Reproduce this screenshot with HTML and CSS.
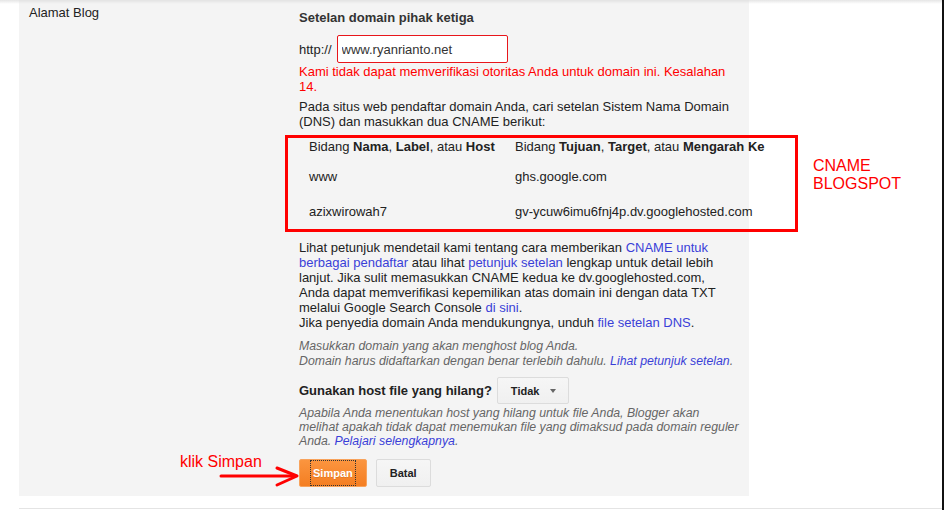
FILE: index.html
```html
<!DOCTYPE html>
<html lang="id">
<head>
    <meta charset="UTF-8">
    <meta name="viewport" content="width=device-width, initial-scale=1.0">
    <title>Alamat Blog</title>
    <link rel="stylesheet" href="styles.css">
</head>
<body>
    <div class="frame">
        <div class="panel">
            <div class="label-col">Alamat Blog</div>

            <div class="field-col">
                <div class="title">Setelan domain pihak ketiga</div>

                <div class="url-row">
                    <span>http://</span>
                    <input type="text" class="url-input" value="www.ryanrianto.net">
                </div>

                <div class="error">Kami tidak dapat memverifikasi otoritas Anda untuk domain ini. Kesalahan 14.</div>

                <div class="para">Pada situs web pendaftar domain Anda, cari setelan Sistem Nama Domain (DNS) dan masukkan dua CNAME berikut:</div>

                <div class="cname-row">
                    <div class="cname-box">
                        <table class="cname-table">
                            <tr class="head">
                                <td>Bidang <b>Nama</b>, <b>Label</b>, atau <b>Host</b></td>
                                <td>Bidang <b>Tujuan</b>, <b>Target</b>, atau <b>Mengarah Ke</b></td>
                            </tr>
                            <tr class="first">
                                <td>www</td>
                                <td>ghs.google.com</td>
                            </tr>
                            <tr>
                                <td>azixwirowah7</td>
                                <td>gv-ycuw6imu6fnj4p.dv.googlehosted.com</td>
                            </tr>
                        </table>
                    </div>
                    <!-- catatan merah -->
                    <div class="note-cname">CNAME<br>BLOGSPOT</div>
                </div>

                <div class="para help">
                    Lihat petunjuk mendetail kami tentang cara memberikan <a href="#">CNAME untuk berbagai pendaftar</a> atau lihat <a href="#">petunjuk setelan</a> lengkap untuk detail lebih lanjut. Jika sulit memasukkan CNAME kedua ke dv.googlehosted.com, Anda dapat memverifikasi kepemilikan atas domain ini dengan data TXT melalui Google Search Console <a href="#">di sini</a>.<br>
                    Jika penyedia domain Anda mendukungnya, unduh <a href="#">file setelan DNS</a>.
                </div>

                <div class="hint">
                    Masukkan domain yang akan menghost blog Anda.<br>
                    Domain harus didaftarkan dengan benar terlebih dahulu. <a href="#">Lihat petunjuk setelan</a>.
                </div>

                <div class="host-row">
                    <span class="host-label">Gunakan host file yang hilang?</span>
                    <button class="select-btn">Tidak <span class="caret"></span></button>
                </div>

                <div class="hint hint-tight">
                    Apabila Anda menentukan host yang hilang untuk file Anda, Blogger akan melihat apakah tidak dapat menemukan file yang dimaksud pada domain reguler Anda. <a href="#">Pelajari selengkapnya</a>.
                </div>

                <div class="btn-row">
                    <div class="note-click">
                        <div class="note-text">klik Simpan</div>
                        <svg class="arrow" width="120" height="22" viewBox="0 0 120 22" fill="none" stroke="#f00" stroke-width="3" stroke-linecap="round" stroke-linejoin="round">
                            <line x1="42" y1="10" x2="116" y2="10"></line>
                            <polyline points="98 2 118 10 98 19"></polyline>
                        </svg>
                    </div>
                    <button class="btn btn-save"><span class="focus-ring">Simpan</span></button>
                    <button class="btn btn-cancel">Batal</button>
                </div>
            </div>
        </div>
        <div class="bottom-line"></div>
    </div>
</body>
</html>
```

FILE: styles.css
```css
    body {
        margin: 0;
        font-family: "Liberation Sans", Arial, sans-serif;
        font-size: 13px;
        line-height: 15px;
        color: #222;
        background-color: white;
    }
    a {
        color: #3a3fd8;
        text-decoration: none;
    }
    .frame {
        width: 942px;
        height: 510px;
        border-right: 2px solid #111;
        background: linear-gradient(rgba(0,0,0,0.1), rgba(0,0,0,0) 4px);
    }
    .panel {
        display: flex;
        margin-left: 19px;
        width: 730px;
        height: 496px;
        background: linear-gradient(rgba(0,0,0,0.07), rgba(0,0,0,0) 4px), #f4f4f4;
    }
    .label-col {
        width: 280px;
        padding: 5px 10px;
        box-sizing: border-box;
        flex-shrink: 0;
    }
    .field-col {
        width: 442px;
        padding-top: 10px;
    }
    .title {
        font-weight: bold;
        color: #333;
    }
    .url-row {
        display: flex;
        align-items: center;
        gap: 5px;
        margin-top: 10px;
    }
    .url-input {
        width: 171px;
        height: 28px;
        padding: 0 4px;
        border: 1px solid #e8161b;
        border-radius: 2px;
        box-sizing: border-box;
        font-family: inherit;
        font-size: 13px;
        color: #333;
        background-color: white;
    }
    .error {
        margin-top: 1px;
        color: #f00;
    }
    .para {
        margin-top: 5px;
    }

.cname-row {
    display: flex;
    align-items: flex-start;
    width: max-content;
    margin-left: -14px;
    margin-top: 6px;
}
.cname-box {
    width: 513px;
    border: 3px solid #f00;
    box-sizing: border-box;
    padding: 1px 0 10px 21px;
}
.cname-table {
    border-collapse: collapse;
}
.cname-table td {
    padding: 0;
    white-space: nowrap;
    vertical-align: top;
}
.cname-table td:first-child {
    width: 206px;
}
.cname-table .head td {
    padding-bottom: 15px;
}
.cname-table .first td {
    padding-bottom: 20px;
}
.note-cname {
    margin-left: 15px;
    margin-top: 22px;
    font-size: 16px;
    line-height: 18px;
    color: #f00;
}

    .help {
        width: 437px;
        margin-top: 8px;
    }
    .hint {
        margin-top: 9px;
        font-size: 12.3px;
        font-style: italic;
        color: #666;
    }
    .hint-tight {
        margin-top: 2px;
        line-height: 14px;
    }
    .host-row {
        display: flex;
        align-items: center;
        margin-top: 8px;
    }
    .host-label {
        font-weight: bold;
    }
    .select-btn {
        display: inline-flex;
        align-items: center;
        height: 27px;
        margin-left: 5px;
        padding: 0 12px 0 13px;
        border: 1px solid #dcdcdc;
        border-radius: 2px;
        background: linear-gradient(#f6f6f6, #f0f0f0);
        font-family: inherit;
        font-size: 11px;
        font-weight: bold;
        color: #222;
    }
    .caret {
        margin-left: 11px;
        border-left: 3.5px solid transparent;
        border-right: 3.5px solid transparent;
        border-top: 4px solid #666;
    }

.btn-row {
    position: relative;
    display: flex;
    gap: 9px;
    margin-top: 11px;
}
.btn {
    height: 28px;
    border-radius: 2px;
    font-family: inherit;
    font-size: 11px;
    font-weight: bold;
    cursor: pointer;
}
.btn-save {
    display: flex;
    align-items: center;
    padding: 0 10px;
    border: 1px solid #f8a35c;
    background: linear-gradient(#fb953f, #f47e22);
    color: white;
    text-shadow: 0 1px 0 rgba(0,0,0,0.1);
}
.focus-ring {
    display: block;
    height: 26px;
    line-height: 26px;
    padding: 0 3px;
    outline: 1px dotted #333;
    outline-offset: -1px;
}
.btn-cancel {
    min-width: 54px;
    padding: 0 13px;
    border: 1px solid #dcdcdc;
    background: linear-gradient(#f6f6f6, #f0f0f0);
    color: #222;
}
.note-click {
    position: absolute;
    right: 100%;
    top: -6px;
    width: 120px;
}
.note-text {
    padding-left: 1px;
    font-size: 16px;
    line-height: 18px;
    color: #f00;
}
.arrow {
    display: block;
    margin-top: -5px;
}
.bottom-line {
    margin-top: 12px;
    margin-left: 19px;
    height: 1px;
    background-color: #e4e4e4;
}
```
